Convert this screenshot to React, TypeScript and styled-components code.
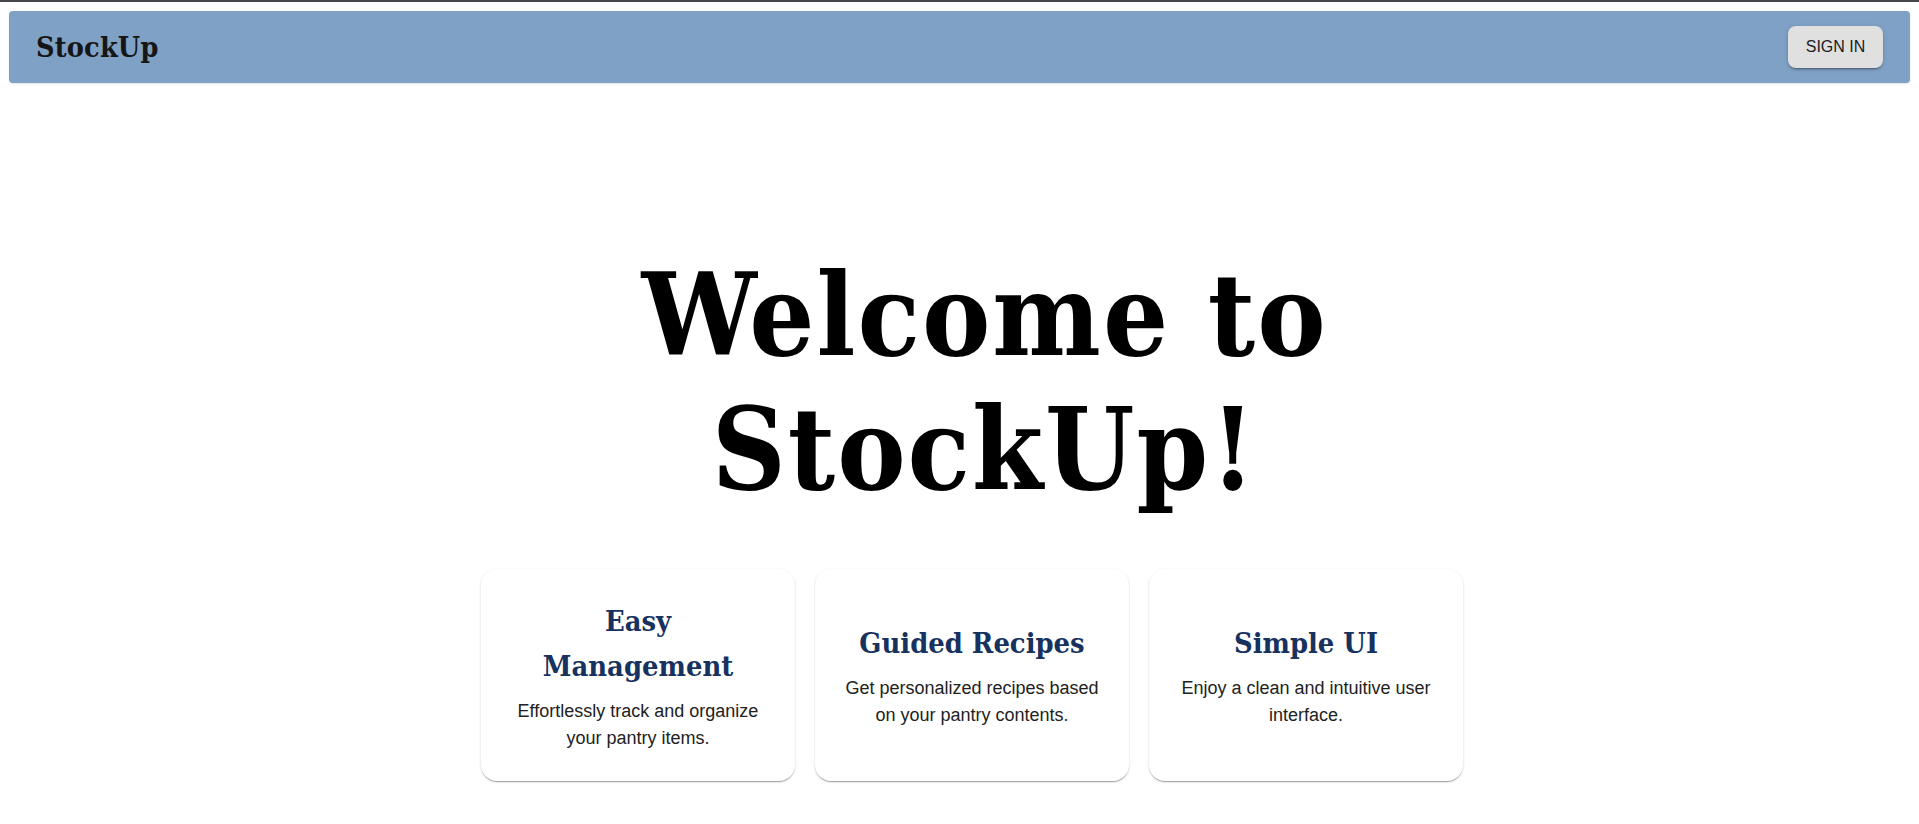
import React from "react";
import styled, { createGlobalStyle } from "styled-components";

const GlobalStyle = createGlobalStyle`
  html, body {
    margin: 0;
    padding: 0;
    background: #ffffff;
  }
  * { box-sizing: border-box; }
`;

const SERIF = `"DejaVu Serif Condensed", "DejaVu Serif", Georgia, serif`;
const SANS = `"Liberation Sans", Arial, sans-serif`;

const TopStrip = styled.div`
  height: 2px;
  background: #48454b;
`;

const Page = styled.div`
  padding: 9px 9px 0;
  min-height: 822px;
`;

const NavBar = styled.header`
  height: 72px;
  background: #7fa1c5;
  border-radius: 4px;
  display: flex;
  align-items: center;
  justify-content: space-between;
  padding: 0 27px 0 27px;
  box-shadow: 0 1px 2px rgba(0, 0, 0, 0.12);
`;

const Logo = styled.div`
  font-family: ${SERIF};
  font-weight: 700;
  font-size: 28.5px;
  letter-spacing: 0.2px;
  color: #161616;
`;

const SignInButton = styled.button`
  height: 42px;
  width: 95px;
  padding: 0;
  border: none;
  border-radius: 8px;
  background: #e0e0e0;
  color: #1b1b1b;
  font-family: ${SANS};
  font-size: 16px;
  cursor: pointer;
  box-shadow: 0px 3px 1px -2px rgba(0, 0, 0, 0.2),
    0px 2px 2px 0px rgba(0, 0, 0, 0.14), 0px 1px 5px 0px rgba(0, 0, 0, 0.12);
`;

const Hero = styled.main`
  display: flex;
  flex-direction: column;
  align-items: center;
  padding: 165px 0 0 50px;
`;

const Heading = styled.h1`
  margin: 0;
  font-family: ${SERIF};
  font-weight: 700;
  font-size: 114px;
  letter-spacing: 2px;
  line-height: 134px;
  color: #000;
  text-align: center;
  max-width: 780px;
`;

const CardRow = styled.section`
  display: flex;
  gap: 20px;
  margin-top: 53px;
  padding-right: 25px;
`;

const Card = styled.article`
  width: 314px;
  min-height: 212px;
  padding: 28px;
  background: #fff;
  border-radius: 16px;
  display: flex;
  flex-direction: column;
  justify-content: center;
  text-align: center;
  box-shadow: 0px 2px 1px -1px rgba(0, 0, 0, 0.2),
    0px 1px 1px 0px rgba(0, 0, 0, 0.14), 0px 1px 3px 0px rgba(0, 0, 0, 0.12);
`;

const CardTitle = styled.h2`
  margin: 0 0 9px;
  font-family: ${SERIF};
  font-weight: 700;
  font-size: 28.8px;
  line-height: 45px;
  color: #17325f;
`;

const CardText = styled.p`
  margin: 0;
  font-family: ${SANS};
  font-size: 18px;
  line-height: 27px;
  color: #222;
`;

const features = [
  {
    title: "Easy Management",
    text: "Effortlessly track and organize your pantry items.",
  },
  {
    title: "Guided Recipes",
    text: "Get personalized recipes based on your pantry contents.",
  },
  {
    title: "Simple UI",
    text: "Enjoy a clean and intuitive user interface.",
  },
];

export default function App() {
  return (
    <>
      <GlobalStyle />
      <TopStrip />
      <Page>
        <NavBar>
          <Logo>StockUp</Logo>
          <SignInButton>SIGN IN</SignInButton>
        </NavBar>
        <Hero>
          <Heading>Welcome to StockUp!</Heading>
          <CardRow>
            {features.map((f) => (
              <Card key={f.title}>
                <CardTitle>{f.title}</CardTitle>
                <CardText>{f.text}</CardText>
              </Card>
            ))}
          </CardRow>
        </Hero>
      </Page>
    </>
  );
}
